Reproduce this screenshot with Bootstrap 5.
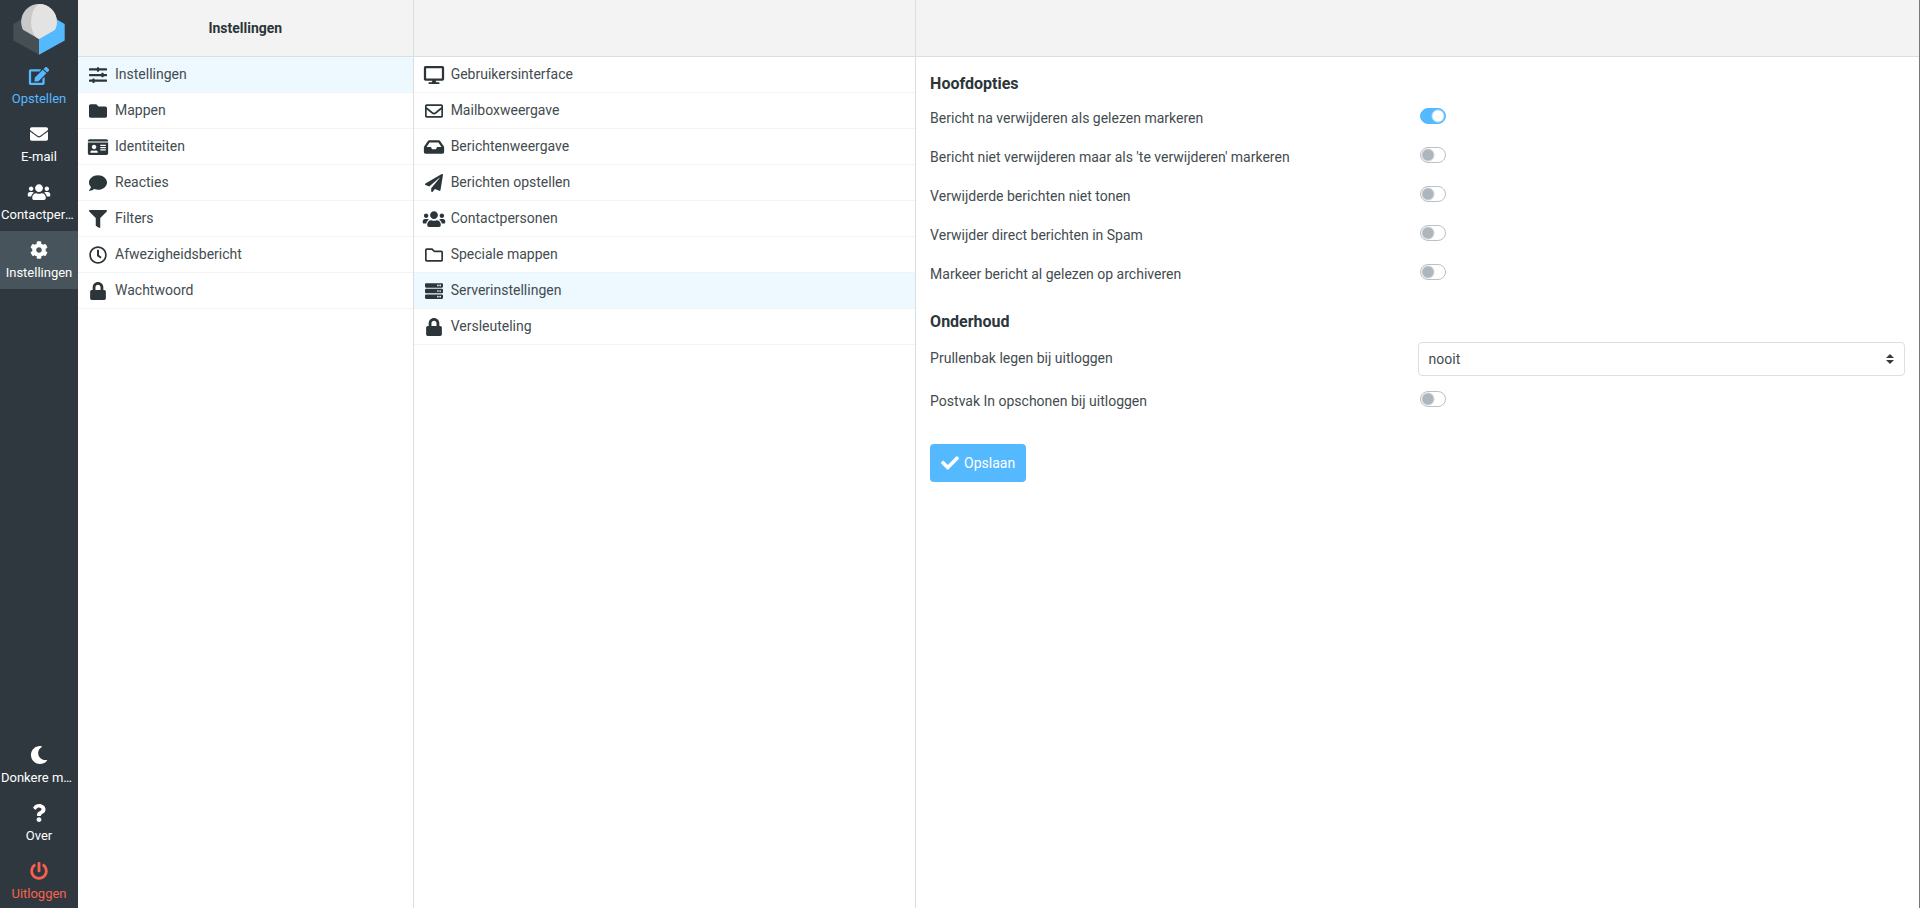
<!DOCTYPE html>
<html lang="nl">
<head>
<meta charset="utf-8">
<meta name="viewport" content="width=device-width, initial-scale=1">
<title>Instellingen</title>
<link href="https://cdn.jsdelivr.net/npm/bootstrap@5.3.0/dist/css/bootstrap.min.css" rel="stylesheet">
<style>
:root { --accent: #55b9ff; --dark: #30383f; --line: #d8e0e3; --ink: #2c363a; }
body { font: 14px/21px Roboto, sans-serif; color: #434c50; background: #fff; overflow: hidden; }
a { text-decoration: none; color: inherit; }
.ico { height: 18px; width: 24px; fill: currentColor; flex: none; }

.taskmenu { width: 78px; background: var(--dark); color: #fff; font-size: 13px; line-height: 18px; }
.taskmenu .logo { height: 57px; }
.taskmenu .task { height: 58px; padding: 10px 1px 0; text-align: center; }
.taskmenu .task .ico { display: block; margin: 0 auto 5px; }
.taskmenu .task.active { background: #48545b; }
.taskmenu .compose { color: var(--accent); }
.taskmenu .logout { color: #f9604e; margin-bottom: -2px; }

.pane { min-width: 0; flex-basis: 0; border-right: 1px solid var(--line); }
.pane-sections { flex-grow: 335; }
.pane-options { flex-grow: 502; }
.pane-content { flex-grow: 1004; border-right-color: #777; }
.pane-head { height: 57px; background: #f3f3f3; border-bottom: 1px solid var(--line); color: var(--ink); }
.pane-head h1 { font-size: 14px; line-height: 21px; font-weight: 700; }
.menu-row { height: 36px; padding: 0 8px; gap: 5px; border-bottom: 1px solid #f1f3f4; }
.menu-row .ico { color: var(--ink); }
.menu-row.active { background: #edf8ff; }

.prefs { padding: 15px 14px; }
.prefs legend { font-size: 16px; line-height: 24px; font-weight: 700; color: var(--ink); margin: 0 0 8px; float: none; }
.prefs .pref { min-height: 39px; }
.prefs .pref > * { padding-top: 4px; }
.prefs .form-check-input { width: 26px; height: 16px; margin: 0 0 0 2px; float: none; display: block;
  border: 1px solid #b9c0c8; border-radius: 8px; background-color: #fff; box-shadow: none;
  background-image: radial-gradient(circle, #adb5bd 5px, transparent 7px);
  background-size: 16px 16px; background-origin: border-box; background-position: left center; }
.prefs .form-check-input:checked { border-color: var(--accent); background-color: var(--accent);
  background-image: radial-gradient(circle, #fff 5px, transparent 7px); background-position: right center; }
.prefs .form-select { height: 34px; padding: 0 28px 0 10px; font-size: 14px; line-height: 21px; color: #434c50; border-color: #dae0e5; border-radius: 4px;
  background-image: url("data:image/svg+xml,%3csvg xmlns='http://www.w3.org/2000/svg' viewBox='0 0 4 5'%3e%3cpath fill='%23343a40' d='M2 0L0 2h4zm0 5L0 3h4z'/%3e%3c/svg%3e");
  background-size: 8px 10px; background-position: right 10px center; }
.prefs .pref-select { min-height: 45px; }
.prefs .pref-select label { padding-top: 6px; }
.prefs .btn-save { height: 38px; margin-top: 7px; padding: 0 11px; gap: 5px; font-size: 14px; color: #fff; background: var(--accent); border: 0; border-radius: 4px; }
.prefs .btn-save .ico { width: 18px; }
.prefs .group-gap { margin-bottom: 11px; }
</style>
</head>
<body>
<svg class="d-none" xmlns="http://www.w3.org/2000/svg">
<symbol id="edit" viewBox="0 0 576 512"><path d="M402.6 83.2l90.2 90.2c3.8 3.8 3.8 10 0 13.8L274.4 405.6l-92.8 10.3c-12.4 1.4-22.9-9.1-21.5-21.5l10.3-92.8L388.8 83.2c3.8-3.8 10-3.8 13.8 0zm162-22.9l-48.8-48.8c-15.2-15.2-39.9-15.2-55.2 0l-35.4 35.4c-3.8 3.8-3.8 10 0 13.8l90.2 90.2c3.8 3.8 10 3.8 13.8 0l35.4-35.4c15.2-15.3 15.2-40 0-55.2zM384 346.2V448H64V128h229.8c3.2 0 6.2-1.3 8.5-3.5l40-40c7.6-7.6 2.2-20.5-8.5-20.5H48C21.5 64 0 85.5 0 112v352c0 26.5 21.5 48 48 48h352c26.5 0 48-21.5 48-48V306.2c0-10.7-12.9-16-20.5-8.5l-40 40c-2.2 2.3-3.5 5.3-3.5 8.5z"/></symbol>
<symbol id="mail" viewBox="0 0 512 512"><path d="M502.3 190.8c3.9-3.1 9.7-.2 9.7 4.7V400c0 26.5-21.5 48-48 48H48c-26.5 0-48-21.5-48-48V195.6c0-5 5.7-7.8 9.7-4.7 22.4 17.4 52.1 39.5 154.1 113.6 21.1 15.4 56.7 47.8 92.2 47.6 35.7.3 72-32.8 92.3-47.6 102-74.1 131.6-96.3 154-113.7zM256 320c23.2.4 56.6-29.2 73.4-41.4 132.7-96.3 142.8-104.7 173.4-128.7 5.8-4.5 9.2-11.5 9.2-18.9v-19c0-26.5-21.5-48-48-48H48c-26.5 0-48 21.5-48 48v19c0 7.4 3.4 14.3 9.2 18.9 30.6 23.9 40.7 32.4 173.4 128.7 16.8 12.2 50.2 41.8 73.4 41.4z"/></symbol>
<symbol id="users" viewBox="0 0 640 512"><path d="M96 224c35.3 0 64-28.7 64-64s-28.7-64-64-64-64 28.7-64 64 28.7 64 64 64zm448 0c35.3 0 64-28.7 64-64s-28.7-64-64-64-64 28.7-64 64 28.7 64 64 64zm32 32h-64c-17.6 0-33.5 7.1-45.1 18.6 40.3 22.1 68.9 62 75.1 109.4h66c17.7 0 32-14.3 32-32v-32c0-35.3-28.7-64-64-64zm-256 0c61.9 0 112-50.1 112-112S381.9 32 320 32 208 82.1 208 144s50.1 112 112 112zm76.8 32h-8.3c-20.8 10-43.9 16-68.5 16s-47.6-6-68.5-16h-8.3C179.6 288 128 339.6 128 403.2V432c0 26.5 21.5 48 48 48h288c26.5 0 48-21.5 48-48v-28.8c0-63.6-51.6-115.2-115.2-115.2zm-223.7-13.4C161.5 263.1 145.6 256 128 256H64c-35.3 0-64 28.7-64 64v32c0 17.7 14.3 32 32 32h65.9c6.3-47.4 34.9-87.3 75.2-109.4z"/></symbol>
<symbol id="cog" viewBox="0 0 512 512"><path d="M487.4 315.7l-42.6-24.6c4.3-23.2 4.3-47 0-70.2l42.6-24.6c4.9-2.8 7.1-8.6 5.5-14-11.1-35.6-30-67.8-54.7-94.6-3.8-4.1-10-5.1-14.8-2.3L380.8 110c-17.9-15.4-38.5-27.3-60.8-35.1V25.8c0-5.6-3.9-10.5-9.4-11.7-36.7-8.2-74.3-7.8-109.2 0-5.5 1.2-9.4 6.1-9.4 11.7V75c-22.2 7.9-42.8 19.8-60.8 35.1L88.7 85.5c-4.9-2.8-11-1.9-14.8 2.3-24.7 26.7-43.6 58.9-54.7 94.6-1.7 5.4.6 11.2 5.5 14L67.3 221c-4.3 23.2-4.3 47 0 70.2l-42.6 24.6c-4.9 2.8-7.1 8.6-5.5 14 11.1 35.6 30 67.8 54.7 94.6 3.8 4.1 10 5.1 14.8 2.3l42.6-24.6c17.9 15.4 38.5 27.3 60.8 35.1v49.2c0 5.6 3.9 10.5 9.4 11.7 36.7 8.2 74.3 7.8 109.2 0 5.5-1.2 9.4-6.1 9.4-11.7v-49.2c22.2-7.9 42.8-19.8 60.8-35.1l42.6 24.6c4.9 2.8 11 1.9 14.8-2.3 24.7-26.7 43.6-58.9 54.7-94.6 1.5-5.5-.7-11.3-5.6-14.1zM256 336c-44.1 0-80-35.9-80-80s35.9-80 80-80 80 35.9 80 80-35.9 80-80 80z"/></symbol>
<symbol id="moon" viewBox="0 0 512 512"><path d="M283.2 512c79 0 151.1-35.9 198.9-94.8 7-8.7-.7-21.4-11.6-19.3-124.2 23.6-238.3-71.6-238.3-197 0-72.2 38.7-138.6 101.5-174.4 9.7-5.5 7.3-20.2-3.7-22.2A258.2 258.2 0 0 0 283.2 0c-141.3 0-256 114.5-256 256 0 141.3 114.5 256 256 256z"/></symbol>
<symbol id="question" viewBox="0 0 384 512"><path d="M202 0C122.2 0 70.5 32.7 29.9 91c-7.4 10.6-5.1 25.1 5.2 32.9l43.1 32.7c10.4 7.9 25.1 6 33.3-4.1 25-31.4 43.6-49.5 82.7-49.5 30.8 0 68.8 19.8 68.8 49.6 0 22.6-18.6 34.2-49 51.2-35.4 19.9-82.3 44.6-82.3 106.4V320c0 13.3 10.7 24 24 24h72.5c13.3 0 24-10.7 24-24v-5.8c0-42.9 125.3-44.6 125.3-160.6C377.5 66.3 286.9 0 202 0zM192 373.5c-38.2 0-69.3 31-69.3 69.2S153.8 512 192 512s69.3-31.1 69.3-69.3-31.1-69.2-69.3-69.2z"/></symbol>
<symbol id="power" viewBox="0 0 512 512"><path d="M400 54.1c63 45 104 118.6 104 201.9 0 136.8-110.8 247.7-247.5 248C120 504.3 8.2 393 8 256.4 7.9 173.1 48.9 99.3 111.8 54.2c11.7-8.3 28-4.8 35 7.7L162.6 90c5.9 10.5 3.1 23.8-6.6 31-41.5 30.8-68 79.6-68 134.9-.1 92.3 74.5 168.1 168 168.1 91.6 0 168.6-74.2 168-169.1-.3-51.8-24.7-101.8-68.1-134-9.7-7.2-12.4-20.5-6.5-30.9l15.8-28.1c7-12.4 23.2-16.1 34.8-7.8zM296 264V24c0-13.3-10.7-24-24-24h-32c-13.3 0-24 10.7-24 24v240c0 13.3 10.7 24 24 24h32c13.3 0 24-10.7 24-24z"/></symbol>
<symbol id="sliders" viewBox="0 0 512 512"><path d="M496 384H160v-16c0-8.8-7.2-16-16-16h-32c-8.8 0-16 7.2-16 16v16H16c-8.8 0-16 7.2-16 16v32c0 8.8 7.2 16 16 16h80v16c0 8.8 7.2 16 16 16h32c8.8 0 16-7.2 16-16v-16h336c8.8 0 16-7.2 16-16v-32c0-8.8-7.2-16-16-16zm0-160h-80v-16c0-8.8-7.2-16-16-16h-32c-8.8 0-16 7.2-16 16v16H16c-8.8 0-16 7.2-16 16v32c0 8.8 7.2 16 16 16h336v16c0 8.8 7.2 16 16 16h32c8.8 0 16-7.2 16-16v-16h80c8.8 0 16-7.2 16-16v-32c0-8.8-7.2-16-16-16zm0-160H288V48c0-8.8-7.2-16-16-16h-32c-8.8 0-16 7.2-16 16v16H16C7.2 64 0 71.2 0 80v32c0 8.8 7.2 16 16 16h208v16c0 8.8 7.2 16 16 16h32c8.8 0 16-7.2 16-16v-16h208c8.8 0 16-7.2 16-16V80c0-8.8-7.2-16-16-16z"/></symbol>
<symbol id="folder" viewBox="0 0 512 512"><path d="M464 128H272l-64-64H48C21.5 64 0 85.5 0 112v288c0 26.5 21.5 48 48 48h416c26.5 0 48-21.5 48-48V176c0-26.5-21.5-48-48-48z"/></symbol>
<symbol id="folder-line" viewBox="0 0 512 512"><path d="M464 128H272l-54.6-54.6c-6-6-14.2-9.4-22.7-9.4H48C21.5 64 0 85.5 0 112v288c0 26.5 21.5 48 48 48h416c26.5 0 48-21.5 48-48V176c0-26.5-21.5-48-48-48zm0 272H48V112h140.1l54.6 54.6c6 6 14.2 9.4 22.7 9.4H464v224z"/></symbol>
<symbol id="idcard" viewBox="0 0 576 512"><path d="M528 32H48C21.5 32 0 53.5 0 80v16h576V80c0-26.5-21.5-48-48-48zM0 432c0 26.5 21.5 48 48 48h480c26.5 0 48-21.5 48-48V128H0v304zm352-232c0-4.4 3.6-8 8-8h144c4.4 0 8 3.6 8 8v16c0 4.4-3.6 8-8 8H360c-4.4 0-8-3.6-8-8v-16zm0 64c0-4.4 3.6-8 8-8h144c4.4 0 8 3.6 8 8v16c0 4.4-3.6 8-8 8H360c-4.4 0-8-3.6-8-8v-16zm0 64c0-4.4 3.6-8 8-8h144c4.4 0 8 3.6 8 8v16c0 4.4-3.6 8-8 8H360c-4.4 0-8-3.6-8-8v-16zM176 192c35.3 0 64 28.7 64 64s-28.7 64-64 64-64-28.7-64-64 28.7-64 64-64zM67.1 396.2C75.5 370.5 99.6 352 128 352h8.2c12.3 5.1 25.7 8 39.8 8s27.6-2.9 39.8-8h8.2c28.4 0 52.5 18.5 60.9 44.2 3.2 9.9-5.2 19.8-15.6 19.8H82.7c-10.4 0-18.8-10-15.6-19.8z"/></symbol>
<symbol id="comment" viewBox="0 0 512 512"><path d="M256 32C114.6 32 0 125.1 0 240c0 49.6 21.4 95 57 130.7C44.5 421.1 2.7 466 2.2 466.5c-2.2 2.3-2.8 5.7-1.5 8.7S4.8 480 8 480c66.3 0 116-31.8 140.6-51.4 32.7 12.3 69 19.4 107.4 19.4 141.4 0 256-93.1 256-208S397.4 32 256 32z"/></symbol>
<symbol id="filter" viewBox="0 0 512 512"><path d="M488 0H24C2.7 0-8 25.9 7.1 41L192 225.9V432c0 7.8 3.8 15.2 10.2 19.7l80 56C298 518.7 320 507.5 320 488V225.9L504.9 41C520 25.9 509.3 0 488 0z"/></symbol>
<symbol id="clock" viewBox="0 0 512 512"><path d="M256 8C119 8 8 119 8 256s111 248 248 248 248-111 248-248S393 8 256 8zm0 448c-110.5 0-200-89.5-200-200S145.5 56 256 56s200 89.5 200 200-89.5 200-200 200zm61.8-104.4l-84.9-61.7c-3.1-2.3-4.9-5.9-4.9-9.7V116c0-6.6 5.4-12 12-12h32c6.6 0 12 5.4 12 12v141.7l66.8 48.6c5.4 3.9 6.5 11.4 2.6 16.8L334.6 349c-3.9 5.3-11.4 6.5-16.8 2.6z"/></symbol>
<symbol id="lock" viewBox="0 0 448 512"><path d="M400 224h-24v-72C376 68.2 307.8 0 224 0S72 68.2 72 152v72H48c-26.5 0-48 21.5-48 48v192c0 26.5 21.5 48 48 48h352c26.5 0 48-21.5 48-48V272c0-26.5-21.5-48-48-48zm-104 0H152v-72c0-39.7 32.3-72 72-72s72 32.3 72 72v72z"/></symbol>
<symbol id="desktop" viewBox="0 0 576 512"><path d="M528 0H48C21.5 0 0 21.5 0 48v320c0 26.5 21.5 48 48 48h192l-16 48h-72c-13.3 0-24 10.7-24 24s10.7 24 24 24h272c13.3 0 24-10.7 24-24s-10.7-24-24-24h-72l-16-48h192c26.5 0 48-21.5 48-48V48c0-26.5-21.5-48-48-48zm-16 352H64V64h448v288z"/></symbol>
<symbol id="mail-line" viewBox="0 0 512 512"><path d="M464 64H48C21.5 64 0 85.5 0 112v288c0 26.5 21.5 48 48 48h416c26.5 0 48-21.5 48-48V112c0-26.5-21.5-48-48-48zm0 48v40.8c-22.4 18.3-58.2 46.7-134.6 106.5-16.8 13.2-50.2 45.1-73.4 44.7-23.2.4-56.6-31.5-73.4-44.7C106.2 199.5 70.4 171.1 48 152.8V112h416zM48 400V214.4c22.9 18.3 55.4 43.9 104.9 82.6 21.9 17.2 60.1 55.2 103.1 55 42.7.2 80.5-37.2 103.1-54.9 49.5-38.8 82-64.4 104.9-82.7V400H48z"/></symbol>
<symbol id="inbox" viewBox="0 0 576 512"><path d="M567.9 243.9L462.2 85.4A48 48 0 0 0 422.3 64H153.7a48 48 0 0 0-39.9 21.4L8.1 243.9A48 48 0 0 0 0 270.5V400c0 26.5 21.5 48 48 48h480c26.5 0 48-21.5 48-48V270.5a48 48 0 0 0-8.1-26.6zM162.3 128h251.4l85.4 128H376l-32 64H232l-32-64H76.9l85.4-128z"/></symbol>
<symbol id="plane" viewBox="0 0 512 512"><path d="M476 3.2L12.5 270.6c-18.1 10.4-15.8 35.6 2.2 43.2L121 358.4l287.3-253.2c5.5-4.9 13.3 2.6 8.6 8.3L176 407v80.5c0 23.6 28.5 32.9 42.5 15.8L282 426l124.6 52.2c14.2 6 30.4-2.9 33-18.2l72-432C515 7.8 493.3-6.8 476 3.2z"/></symbol>
<symbol id="server" viewBox="0 0 512 512"><path fill-rule="evenodd" d="M32 32h448a32 32 0 0 1 32 32v64a32 32 0 0 1-32 32H32a32 32 0 0 1-32-32V64a32 32 0 0 1 32-32zm400 40a24 24 0 1 0 0 48 24 24 0 0 0 0-48zm-64 0a24 24 0 1 0 0 48 24 24 0 0 0 0-48zM32 192h448a32 32 0 0 1 32 32v64a32 32 0 0 1-32 32H32a32 32 0 0 1-32-32v-64a32 32 0 0 1 32-32zm400 40a24 24 0 1 0 0 48 24 24 0 0 0 0-48zm-64 0a24 24 0 1 0 0 48 24 24 0 0 0 0-48zM32 352h448a32 32 0 0 1 32 32v64a32 32 0 0 1-32 32H32a32 32 0 0 1-32-32v-64a32 32 0 0 1 32-32zm400 40a24 24 0 1 0 0 48 24 24 0 0 0 0-48zm-64 0a24 24 0 1 0 0 48 24 24 0 0 0 0-48z"/></symbol>
<symbol id="check" viewBox="0 0 512 512"><path d="M173.9 439.4L7.5 273c-10-10-10-26.2 0-36.2l36.2-36.2c10-10 26.2-10 36.2 0L192 312.7 432.1 72.6c10-10 26.2-10 36.2 0l36.2 36.2c10 10 10 26.2 0 36.2L210.1 439.4c-10 10-26.2 10-36.2 0z"/></symbol>
</svg>

<div class="d-flex vh-100">
  <nav class="taskmenu d-flex flex-column flex-shrink-0" aria-label="Taken">
    <div class="logo flex-shrink-0">
      <svg class="d-block" width="78" height="57" viewBox="0 0 78 57" role="img" aria-label="Logo">
        <path fill="#454f54" d="M13.3 24l8.7-5L39 30v24.8L13.3 40.5z"/>
        <path fill="#55b9ff" d="M64.7 24L56 19 39 30v24.8l25.7-14.3z"/>
        <clipPath id="rim"><path d="M0 0h78v16.5L39 39 0 16.5z"/></clipPath>
        <g clip-path="url(#rim)"><circle cx="39" cy="21.8" r="17.9" fill="#c9c9c9"/><path fill="#e3e3e3" d="M39 3.9a17.9 17.9 0 0 1 0 35.8C28.5 34 28.500 10 39 3.9z"/></g>
      </svg>
    </div>
    <a href="#" class="task compose text-truncate"><svg class="ico"><use href="#edit"/></svg>Opstellen</a>
    <a href="#" class="task text-truncate"><svg class="ico"><use href="#mail"/></svg>E-mail</a>
    <a href="#" class="task text-truncate"><svg class="ico"><use href="#users"/></svg>Contactpersonen</a>
    <a href="#" class="task active text-truncate" aria-current="page"><svg class="ico"><use href="#cog"/></svg>Instellingen</a>
    <a href="#" class="task text-truncate mt-auto"><svg class="ico"><use href="#moon"/></svg>Donkere modus</a>
    <a href="#" class="task text-truncate"><svg class="ico"><use href="#question"/></svg>Over</a>
    <a href="#" class="task logout text-truncate"><svg class="ico"><use href="#power"/></svg>Uitloggen</a>
  </nav>

  <section class="pane pane-sections">
    <header class="pane-head d-flex align-items-center justify-content-center"><h1 class="m-0">Instellingen</h1></header>
    <nav aria-label="Instellingen">
      <a href="#" class="menu-row active d-flex align-items-center"><svg class="ico"><use href="#sliders"/></svg>Instellingen</a>
      <a href="#" class="menu-row d-flex align-items-center"><svg class="ico"><use href="#folder"/></svg>Mappen</a>
      <a href="#" class="menu-row d-flex align-items-center"><svg class="ico"><use href="#idcard"/></svg>Identiteiten</a>
      <a href="#" class="menu-row d-flex align-items-center"><svg class="ico"><use href="#comment"/></svg>Reacties</a>
      <a href="#" class="menu-row d-flex align-items-center"><svg class="ico"><use href="#filter"/></svg>Filters</a>
      <a href="#" class="menu-row d-flex align-items-center"><svg class="ico"><use href="#clock"/></svg>Afwezigheidsbericht</a>
      <a href="#" class="menu-row d-flex align-items-center"><svg class="ico"><use href="#lock"/></svg>Wachtwoord</a>
    </nav>
  </section>

  <section class="pane pane-options">
    <header class="pane-head"></header>
    <nav aria-label="Onderdelen">
      <a href="#" class="menu-row d-flex align-items-center"><svg class="ico"><use href="#desktop"/></svg>Gebruikersinterface</a>
      <a href="#" class="menu-row d-flex align-items-center"><svg class="ico"><use href="#mail-line"/></svg>Mailboxweergave</a>
      <a href="#" class="menu-row d-flex align-items-center"><svg class="ico"><use href="#inbox"/></svg>Berichtenweergave</a>
      <a href="#" class="menu-row d-flex align-items-center"><svg class="ico"><use href="#plane"/></svg>Berichten opstellen</a>
      <a href="#" class="menu-row d-flex align-items-center"><svg class="ico"><use href="#users"/></svg>Contactpersonen</a>
      <a href="#" class="menu-row d-flex align-items-center"><svg class="ico"><use href="#folder-line"/></svg>Speciale mappen</a>
      <a href="#" class="menu-row active d-flex align-items-center"><svg class="ico"><use href="#server"/></svg>Serverinstellingen</a>
      <a href="#" class="menu-row d-flex align-items-center"><svg class="ico"><use href="#lock"/></svg>Versleuteling</a>
    </nav>
  </section>

  <main class="pane pane-content">
    <header class="pane-head"></header>
    <form class="prefs">
      <fieldset class="group-gap">
        <legend>Hoofdopties</legend>
        <div class="row g-0 pref"><label class="col-6" for="p1">Bericht na verwijderen als gelezen markeren</label><div class="col-6 form-switch ps-0"><input class="form-check-input" type="checkbox" role="switch" id="p1" checked></div></div>
        <div class="row g-0 pref"><label class="col-6" for="p2">Bericht niet verwijderen maar als 'te verwijderen' markeren</label><div class="col-6 form-switch ps-0"><input class="form-check-input" type="checkbox" role="switch" id="p2"></div></div>
        <div class="row g-0 pref"><label class="col-6" for="p3">Verwijderde berichten niet tonen</label><div class="col-6 form-switch ps-0"><input class="form-check-input" type="checkbox" role="switch" id="p3"></div></div>
        <div class="row g-0 pref"><label class="col-6" for="p4">Verwijder direct berichten in Spam</label><div class="col-6 form-switch ps-0"><input class="form-check-input" type="checkbox" role="switch" id="p4"></div></div>
        <div class="row g-0 pref"><label class="col-6" for="p5">Markeer bericht al gelezen op archiveren</label><div class="col-6 form-switch ps-0"><input class="form-check-input" type="checkbox" role="switch" id="p5"></div></div>
      </fieldset>
      <fieldset class="group-gap">
        <legend>Onderhoud</legend>
        <div class="row g-0 pref-select"><label class="col-6" for="p6">Prullenbak legen bij uitloggen</label><div class="col-6"><select class="form-select" id="p6"><option>nooit</option></select></div></div>
        <div class="row g-0 pref"><label class="col-6" for="p7">Postvak In opschonen bij uitloggen</label><div class="col-6 form-switch ps-0"><input class="form-check-input" type="checkbox" role="switch" id="p7"></div></div>
      </fieldset>
      <button type="button" class="btn btn-save d-inline-flex align-items-center"><svg class="ico"><use href="#check"/></svg>Opslaan</button>
    </form>
  </main>
</div>
<script src="https://cdn.jsdelivr.net/npm/bootstrap@5.3.0/dist/js/bootstrap.bundle.min.js"></script>
</body>
</html>
